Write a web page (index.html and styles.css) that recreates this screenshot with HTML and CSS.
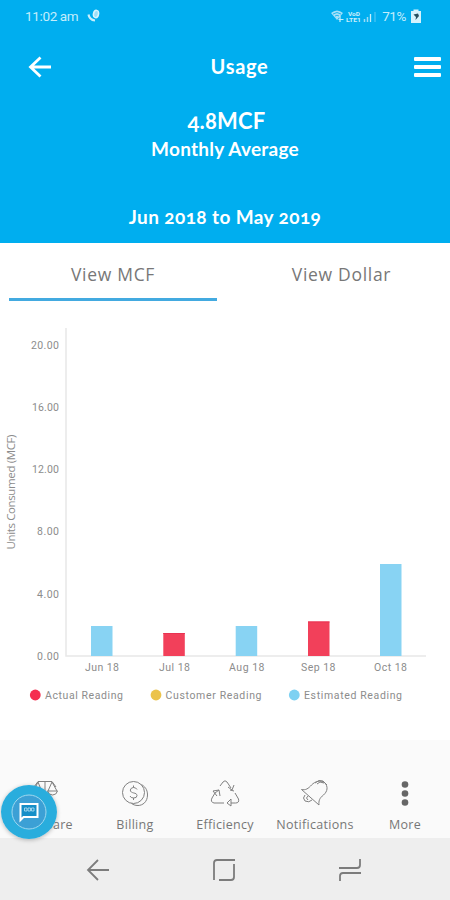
FILE: index.html
```html
<!DOCTYPE html>
<html lang="en">
<head>
<meta charset="utf-8">
<title>Usage</title>
<link rel="stylesheet" href="styles.css">
</head>
<body>
<div class="app">
  <header class="header">
    <div class="status">
      <span class="time">11:02 am</span>
      <svg class="call" width="14" height="14" viewBox="0 0 14 14"><path d="M1.500 5.500c.5 3 3 5.500 6.500 6" fill="none" stroke="#c9eefb" stroke-width="2.200"/><ellipse cx="9" cy="5" rx="2.500" ry="3.700" transform="rotate(12 9 5)" fill="#9edff8" stroke="#d9f4fd" stroke-width="1.500"/></svg>
      <svg class="signals" width="48" height="14" viewBox="0 0 48 14">
        <path d="M1 4q6-5 12 0L7 11z" fill="#a5e0f8"/><path d="M3 5q4-3 8 0M5 7q2-1.500 4 0" fill="none" stroke="#00aeef" stroke-width=".8"/><path d="M10 7v6M8.500 10.500h5" stroke="#c9eefb" stroke-width="1.200"/>
        <text class="lte" x="18" y="6.500" textLength="12" lengthAdjust="spacingAndGlyphs">VoD</text><text class="lte" x="16" y="12.500" textLength="15" lengthAdjust="spacingAndGlyphs">LTE1</text>
        <path d="M34.500 10v3M37.500 8v5" stroke="#9adcf7" stroke-width="1.500"/><path d="M40.500 5v8" stroke="#c9eefb" stroke-width="1.300"/><path d="M45 3v10" stroke="#5cc9f4"/>
      </svg>
      <span class="percent">71%</span>
      <svg width="12" height="15" viewBox="0 0 12 15"><path d="M3.500 2V.5h5V2H11v12H1V2z" fill="#d5f2fd"/><path d="M3.500 5.500 8 4.500 9 7 5.500 11 6 8z" fill="#254f60"/></svg>
    </div>
    <div class="titlebar">
      <svg width="24" height="22" viewBox="0 0 24 22"><path d="M23 11H2M12.500 1.500 2.500 11l10 9.500" fill="none" stroke="#fff" stroke-width="2.800"/></svg>
      <h1>Usage</h1>
      <div class="burger"><i></i><i></i><i></i></div>
    </div>
    <div class="amount">4.8MCF</div>
    <div class="caption">Monthly Average</div>
    <div class="range">Jun 2018 to May 2019</div>
  </header>
  <nav class="tabs"><a class="tab active">View MCF</a><a class="tab dollar">View Dollar</a></nav>
  <main class="chart">
    <svg width="450" height="439" viewBox="0 301 450 439">
      <path d="M66 328V656H426" fill="none" stroke="#e8e8e8" stroke-width="1.500"/>
      <g class="ylabels">
        <text x="31" y="349" textLength="28">20.00</text><text x="32" y="411" textLength="27">16.00</text><text x="32" y="473" textLength="27">12.00</text><text x="37" y="535" textLength="22">8.00</text><text x="37" y="597.500" textLength="22">4.00</text><text x="37" y="659.500" textLength="22">0.00</text>
      </g>
      <text class="axis" transform="translate(14.500 549.500) rotate(-90)" textLength="115">Units Consumed (MCF)</text>
      <g fill="#88d3f3"><path d="M91 626h21.500v30H91zM235.700 626h21.500v30h-21.500zM380 564h21.500v92H380z"/></g>
      <g fill="#f2405a"><path d="M163.300 633h21.500v23h-21.500zM308 621.500h21.500V656H308z"/></g>
      <path d="M163.300 633.500h21.500M308 622h21.500" stroke="#e93352"/>
      <g class="xlabels">
        <text x="85" y="671" textLength="34">Jun 18</text><text x="159" y="671" textLength="31">Jul 18</text><text x="229" y="671" textLength="35.500">Aug 18</text><text x="301" y="671" textLength="34.500">Sep 18</text><text x="374" y="671" textLength="33">Oct 18</text>
      </g>
      <circle cx="35.300" cy="695" r="5.400" fill="#f52f50"/><circle cx="156" cy="695" r="5.400" fill="#ebc34b"/><circle cx="294.300" cy="695" r="5.400" fill="#7ed1f2"/>
      <g class="legend"><text x="45" y="699" textLength="78">Actual Reading</text><text x="165.500" y="699" textLength="96">Customer Reading</text><text x="304" y="699" textLength="98">Estimated Reading</text></g>
    </svg>
  </main>
  <footer class="bottom">
    <a class="item"><svg width="30" height="30" viewBox="0 0 30 30"><path d="M4 8 8 2.500h14L26 8M15 2v24M8 3 3 13M8 3l4 10M22 3l-4 9M22 3l5 9M17.500 12h10q-1 4-5 4t-5-4zM2 13h10q-1 4-5 4t-5-4z"/></svg><span class="l0">Compare</span></a>
    <a class="item"><svg width="30" height="30" viewBox="0 0 30 30"><circle cx="13.500" cy="13.500" r="11"/><path d="M21.500 5.500c3 2 6 4.500 6 10.500 0 7-5 10.500-9.500 10.500-3 0-5-1-6.500-2"/><path d="M17 10.500q-1-2-3.500-2t-3.200 2.500c0 4 6.700 2 6.700 5.500q0 2.500-3.200 2.500T10 17M13.500 6.500v2M13.500 19v2"/></svg><span class="l1">Billing</span></a>
    <a class="item"><svg width="30" height="30" viewBox="0 0 30 30"><path d="m10 7 3-4q2-2.500 4 0l4 6M18 8l4 3 2-5M20 11l4 1M25 14l3.500 6q1 4-3 4H21M21 20l-4 4 4 3zM14 24H4q-4-1-2-5l3-5M3 12l6-1 1 6M3 12l4 5M5 14l4-3"/></svg><span class="l2">Efficiency</span></a>
    <a class="item"><svg width="30" height="30" viewBox="0 0 30 30"><path d="M1.500 10.500c4 1 7-1 10-4.500 4-4 9-5 13-2.500 4 4 3 9-1 12.500-4 3-5 6-4.500 10zM15 4q4-4 8-2l4 4M17 5l3-2 4 1M5 16q-3 3 0 6 4 2 7-1M8 17q-3 2 0 4"/></svg><span class="l3">Notifications</span></a>
    <a class="item"><svg width="30" height="30" viewBox="0 0 30 30"><g class="dots"><circle cx="15" cy="5.500" r="3.300"/><circle cx="15" cy="14.500" r="3.300"/><circle cx="15" cy="23.500" r="3.300"/></g></svg><span class="l4">More</span></a>
    <div class="chat"><svg width="56" height="54" viewBox="0 0 56 54"><ellipse cx="28" cy="27" rx="28" ry="27" fill="#29addd"/><circle cx="28" cy="27" r="17" fill="#3ca0d5" stroke="#a0d8ef"/><path d="M19.500 19h17v13h-14l-3 3z" fill="#168fc8" stroke="#fff" stroke-width="2"/><path d="M23.500 23h2.500v3h-2.500zM27 23h2.500v3H27zM30.500 23H33v3h-2.500z" fill="none" stroke="#a8daf0" stroke-width=".9"/></svg></div>
  </footer>
  <div class="system">
    <svg width="24" height="24" viewBox="0 0 24 24"><path d="M24 12H3M13 2 3 12l10 10"/></svg>
    <svg width="24" height="24" viewBox="0 0 24 24"><path d="M2 22V5q0-3 3-3h18M22 6v13q0 3-3 3H7"/></svg>
    <svg width="24" height="24" viewBox="0 0 24 24"><path d="M1 10h18q3 0 3-3V1M23 15H5q-3 0-3 3v5"/></svg>
  </div>
</div>
</body>
</html>
```
FILE: styles.css
```css
* { box-sizing: border-box; }
body { margin: 0; background: #fff; font-family: "Open Sans", sans-serif; }
svg { display: block; flex: none; }
.app { width: 450px; height: 900px; display: flex; flex-direction: column; overflow: hidden; }
.header { height: 243px; background: #00aeef; color: #fff; text-align: center; font-family: Lato, sans-serif; font-variant-numeric: oldstyle-nums; font-weight: 700; flex: none; }
.status { height: 32px; display: flex; align-items: center; padding: 0 28px 0 25px; font: 13.5px Roboto, sans-serif; color: #c4edfc; }
.time { width: 52px; white-space: nowrap; letter-spacing: -.35px; }
.call { margin-left: 10px; margin-right: auto; }
.signals { margin-right: 4px; }
.lte { font: bold 6px Roboto, sans-serif; fill: #c9eefb; }
.percent { width: 24px; margin-right: 4px; letter-spacing: -.5px; }
.titlebar { height: 70px; display: grid; grid-template-columns: 60px 1fr 60px; align-items: center; padding: 0 9px 0 28px; }
h1 { font-size: 20px; line-height: 24px; margin: -2px 0 0 10px; letter-spacing: .7px; }
.burger { width: 27px; display: flex; flex-direction: column; gap: 4px; justify-self: end; }
.burger i { height: 4px; background: #fff; border-radius: 1px; }
.amount { font-size: 22px; line-height: 30px; margin: 4px 0 0 3px; letter-spacing: .2px; }
.caption { font-size: 19px; line-height: 26px; letter-spacing: .25px; }
.range { font-size: 19px; line-height: 28px; margin-top: 41px; letter-spacing: .4px; }
.tabs { height: 58px; display: flex; padding: 0 9px; flex: none; }
.tab { width: 208px; height: 58px; padding-top: 17px; text-align: center; font: 17.5px/28px "Open Sans", sans-serif; letter-spacing: .7px; color: #777; flex: none; }
.tab.dollar { margin-left: 20px; padding-left: 2px; padding-right: 0; width: 207px; }
.active { border-bottom: 3px solid #43aae0; }
.chart { height: 439px; flex: none; }
.chart text { fill: #8c8c8c; font: 10.5px Roboto, sans-serif; }
.chart .axis { font: 11.5px "Open Sans", sans-serif; }
.bottom { position: relative; height: 98px; background: #fafafa; display: grid; grid-template-columns: repeat(5, 90px); flex: none; }
.item { display: flex; flex-direction: column; align-items: center; padding-top: 39px; font: 12.5px/18px "Open Sans", sans-serif; letter-spacing: .3px; color: #777; }
.item svg { fill: none; stroke: #808080; stroke-width: 1; }
.item span { margin-top: 7px; }
.item .dots { fill: #666; stroke: none; }
.chat { position: absolute; left: 1px; top: 45px; border-radius: 50%; box-shadow: 0 1px 4px #0004; }
.system { height: 62px; flex: none; background: #eee; display: flex; justify-content: space-between; padding: 20px 88px 0 85px; }
.system svg { fill: none; stroke: #7c7c7c; stroke-width: 1.800; }
```
